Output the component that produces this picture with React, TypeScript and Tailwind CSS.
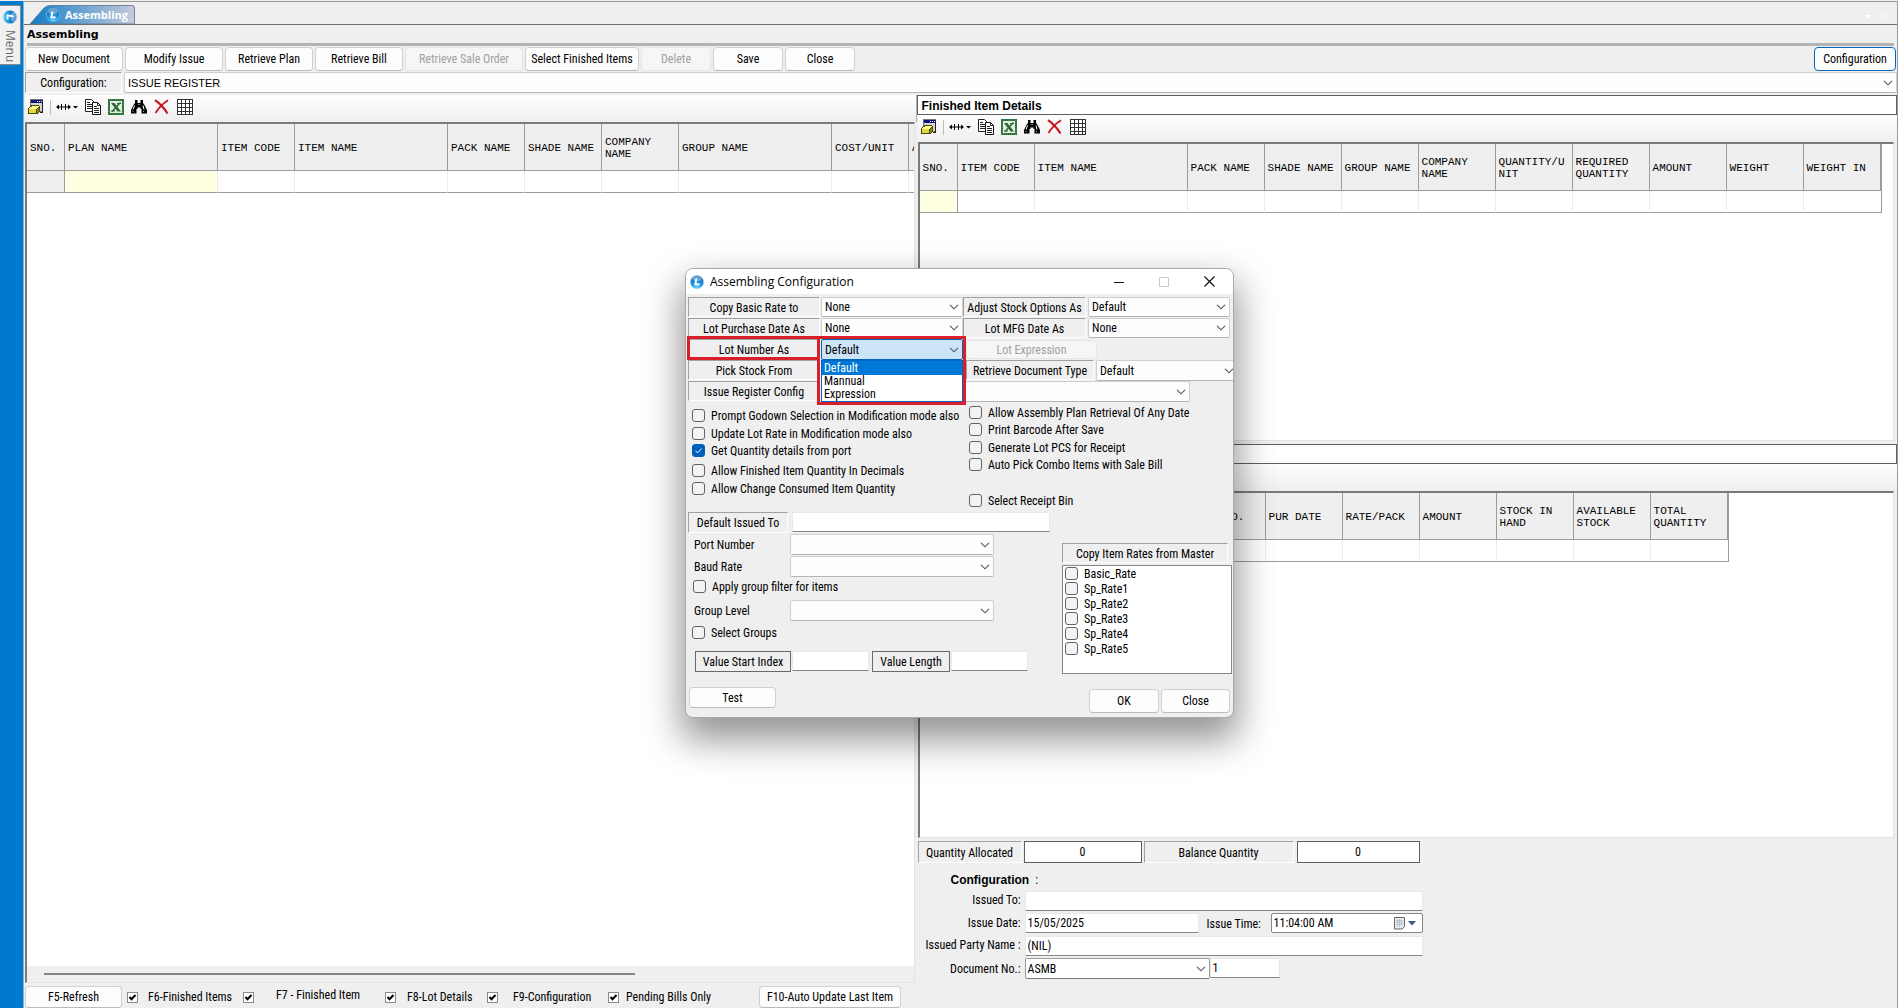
import React, { useId } from "react";

const UI = "font-['Roboto_Condensed','Roboto',sans-serif] text-[12px] leading-4 text-black";

function LogoIcon({ size = 14 }: { size?: number }) {
  const id = useId();
  return (
    <svg width={size} height={size} viewBox="0 0 14 14" aria-hidden="true" className="shrink-0">
      <defs>
        <radialGradient id={id} cx="50%" cy="90%" r="85%">
          <stop offset="0" stopColor="#5fd0fb" />
          <stop offset="0.5" stopColor="#1f93dc" />
          <stop offset="1" stopColor="#0b5cab" />
        </radialGradient>
      </defs>
      <circle cx="7" cy="7" r="6.6" fill={`url(#${id})`} stroke="#8ecbf2" strokeWidth="0.6" />
      <ellipse cx="7" cy="3.4" rx="4.8" ry="2.6" fill="#ffffff" opacity="0.35" />
      <path d="M5.4 3.4h1.900L6.500 8.600h3.200l-.3 1.600H4.300z" fill="#fff" />
    </svg>
  );
}

function Chevron() {
  return (
    <svg width="10" height="6" viewBox="0 0 10 6" aria-hidden="true">
      <path d="M1 0.8 5 4.8 9 0.8" fill="none" stroke="#555" strokeWidth="1.1" />
    </svg>
  );
}

function Combo({ label, value = "", className, inner = "bg-[#fdfdfd] border-[#cfcfcf] border-b-[#b4b4b4]", pad = "pl-[3px]" }: {
  label: string; value?: string; className: string; inner?: string; pad?: string;
}) {
  return (
    <span className={"relative flex shrink-0 " + className}>
      <select aria-label={label} defaultValue={value} className={"h-full w-full appearance-none rounded-[2px] border pr-5 outline-none " + pad + " " + inner}>
        <option>{value}</option>
      </select>
      <span className="pointer-events-none absolute inset-y-0 right-1 flex items-center"><Chevron /></span>
    </span>
  );
}

function Sunken({ children, className }: { children: React.ReactNode; className: string }) {
  return (
    <span className={"flex shrink-0 items-center justify-center whitespace-nowrap border border-t-[#a0a0a0] border-l-[#a0a0a0] border-r-white border-b-white pt-px " + className}>
      {children}
    </span>
  );
}

function Button({ children, className, disabled }: { children: React.ReactNode; className: string; disabled?: boolean }) {
  return (
    <button
      type="button"
      disabled={disabled}
      className={"shrink-0 rounded-[4px] border border-[#d0d0d0] border-b-[#bcbcbc] bg-[#fdfdfd] whitespace-nowrap disabled:border-[#e6e6e6] disabled:bg-[#f6f6f6] disabled:text-[#a0a0a0] " + className}
    >
      {children}
    </button>
  );
}

function Check({ label, className = "", checked = false, row = "h-[17px]" }: { label: string; className?: string; checked?: boolean; row?: string }) {
  const id = useId();
  return (
    <div className={"flex items-center " + row + " " + className}>
      <span className="relative flex size-[13px] shrink-0">
        <input id={id} type="checkbox" defaultChecked={checked} className="size-[13px] appearance-none rounded-[3px] border border-[#626262] bg-[#f3f3f3] checked:border-[#005fb8] checked:bg-[#005fb8]" />
        {checked && (
          <svg viewBox="0 0 13 13" className="pointer-events-none absolute inset-0" aria-hidden="true">
            <path d="M3.5 6.8 5.6 8.8 9.6 4.6" fill="none" stroke="#fff" />
          </svg>
        )}
      </span>
      <label htmlFor={id} className="whitespace-nowrap pl-[6px]">{label}</label>
    </div>
  );
}

function ClassicCheck({ label, className, labelClass }: { label: string; className: string; labelClass: string }) {
  const id = useId();
  return (
    <div className={"flex shrink-0 items-center " + className}>
      <span className="relative flex size-[11px] shrink-0">
        <input id={id} type="checkbox" defaultChecked className="size-[11px] appearance-none border border-[#8a8a8a] bg-white" />
        <svg viewBox="0 0 11 11" className="pointer-events-none absolute inset-0" aria-hidden="true">
          <path d="M2.5 5 4.5 7.2 8.5 3" fill="none" stroke="#000" strokeWidth="2" />
        </svg>
      </span>
      <label htmlFor={id} className={"whitespace-nowrap " + labelClass}>{label}</label>
    </div>
  );
}

function FormIcon() {
  return (
    <svg width="16" height="16" viewBox="0 0 16 16" shapeRendering="crispEdges" aria-hidden="true">
      <path d="M2 0h13v13H2z" fill="#777" />
      <path d="M3 1h11v11H3z" fill="#d4d4d4" />
      <path d="M3 1h11v3H3z" fill="#10107a" />
      <path d="M9 2h1v1H9zM11 2h1v1h-1zM13 2h1v1h-1z" fill="#fff" />
      <path d="M4 6h7v1h1v5l-3 3H0V9z" fill="#4a4a08" />
      <path d="M5 7h6v1l-3 2H1V9z" fill="#ffff8a" />
      <path d="M1 10h7v4H1z" fill="#e0d840" />
      <path d="M9 10l2-2v4l-2 2z" fill="#8c8416" />
      <path d="M14 1h1v13h-3v-1h2z" fill="#222" />
    </svg>
  );
}

function WidthIcon() {
  return (
    <svg width="24" height="16" viewBox="0 0 24 16" aria-hidden="true">
      <path d="M0 8 3 5.500v5zM15 8l-3-2.500v5z" fill="#000" />
      <path d="M2 7.500h11v1H2zM5 5h1v6H5zM9 5h1v6H9z" fill="#000" />
      <path d="M17 7h5L19.500 9.500z" fill="#000" />
    </svg>
  );
}

function CopyIcon() {
  return (
    <svg width="16" height="16" viewBox="0 0 16 16" aria-hidden="true">
      <path d="M.5.500h6l2.500 2.500v9.500H.5z" fill="#fff" stroke="#222" />
      <path d="M2 3.500h3M2 5.500h5M2 7.500h5M2 9.500h5" stroke="#222" />
      <path d="M7.500 3.500h5l3 3v9h-8z" fill="#fff" stroke="#111" />
      <path d="M12.500 3.500v3h3M9 7.500h3M9 9.500h5M9 11.500h5M9 13.500h5" stroke="#222" fill="none" />
    </svg>
  );
}

function ExcelIcon() {
  return (
    <svg width="16" height="16" viewBox="0 0 16 16" aria-hidden="true">
      <path d="M1 1h14v14H1z" fill="#e4efe4" stroke="#2a6a34" strokeWidth="2" />
      <path d="M1 1h14v14H1z" fill="none" stroke="#5f9c6a" strokeDasharray="1 1" />
      <path d="M3 4h3.500l6.500 8.500H9.500z" fill="#2a6a34" />
      <path d="M12.500 3.500 4 12.500" stroke="#2a6a34" strokeWidth="1.400" />
      <path d="M9 4.500h4M3 12h4" stroke="#2a6a34" />
    </svg>
  );
}

function FindIcon() {
  return (
    <svg width="16" height="16" viewBox="0 0 16 16" aria-hidden="true">
      <path d="M4 1h2.500v3H9.500V1H12v3l1.500 2L16 11v3.500h-5.500V10h-1V8.500h-3V10h-1v4.500H0V11l2.500-5L4 4z" fill="#000" />
      <path d="M3.500 6.500 2 10.500M12 6.500l1 4M7.500 5.500h1" stroke="#fff" />
      <path d="M1.500 12.500h1M12 12.500h1" stroke="#aaa" />
    </svg>
  );
}

function DeleteIcon() {
  return (
    <svg width="16" height="16" viewBox="0 0 16 16" aria-hidden="true">
      <path d="M1 1.200C4.500 3.500 10 9 13.500 14.500" fill="none" stroke="#c8141c" strokeWidth="2.200" />
      <path d="M14 1.200C9.500 4 4.500 9 1.500 14" fill="none" stroke="#c8141c" strokeWidth="1.700" />
    </svg>
  );
}

function GridIcon() {
  return (
    <svg width="16" height="16" viewBox="0 0 16 16" shapeRendering="crispEdges" aria-hidden="true">
      <path d="M0 0h16v16H0z" fill="#333" />
      {[1, 5, 9, 13].map((y) => [1, 5, 9, 13].map((x) => (
        <rect key={x + "-" + y} x={x} y={y} width={x === 13 ? 2 : 3} height={y === 13 ? 2 : 3} fill="#fff" />
      )))}
    </svg>
  );
}

function Toolbar() {
  const tools: [string, React.ReactNode][] = [
    ["Copy", <CopyIcon key="c" />],
    ["Export to Excel", <ExcelIcon key="e" />],
    ["Find", <FindIcon key="f" />],
    ["Remove", <DeleteIcon key="d" />],
    ["Grid", <GridIcon key="g" />],
  ];
  return (
    <div className="flex h-[27px] shrink-0 items-center bg-gradient-to-b from-[#fdfdfd] to-[#efefef] pb-[3px] pl-[3px]">
      <button type="button" aria-label="Form"><FormIcon /></button>
      <span className="ml-[6px] mr-[5px] h-[15px] w-px bg-[#bdbdbd]" />
      <button type="button" aria-label="Column width" className="mr-[5px]"><WidthIcon /></button>
      <div className="flex gap-[7px]">
        {tools.map(([name, icon]) => (
          <button key={name} type="button" aria-label={name}>{icon}</button>
        ))}
      </div>
    </div>
  );
}

type Col = [string, number];

function Grid({ cols, yellow, closed, offset }: { cols: Col[]; yellow: number; closed?: boolean; offset?: string }) {
  const total = cols.reduce((sum, c) => sum + c[1], 0);
  return (
    <table className="table-fixed border-separate border-spacing-0" style={{ width: total }}>
      <colgroup>{cols.map((c, i) => <col key={i} style={{ width: c[1] }} />)}</colgroup>
      <thead>
        <tr className="h-[47px]">
          {cols.map((c, i) => (
            <th key={i} className={"border-r border-b border-[#9c9c9c] bg-[#efefef] p-0 text-left align-middle font-['Liberation_Mono',monospace] text-[11px] font-normal leading-3 " + (closed && i === cols.length - 1 ? "border-r-2" : "")}>
              <div className={"overflow-hidden break-all whitespace-pre-line pr-[2px] pt-px " + (offset && c[0] === "NO." ? offset : "pl-[3px]")}>{c[0]}</div>
            </th>
          ))}
        </tr>
      </thead>
      <tbody>
        <tr className="h-[22px]">
          {cols.map((_, i) => (
            <td
              key={i}
              className={
                "border-r border-b border-b-[#9c9c9c] p-0 " +
                (i === yellow ? "bg-[#ffffe1] " : i === 0 ? "bg-[#efefef] " : "bg-white ") +
                (i === 0 || (closed && i === cols.length - 1) ? "border-r-[#9c9c9c]" : "border-r-[#ebebeb]")
              }
            />
          ))}
        </tr>
      </tbody>
    </table>
  );
}

const FRAME = "min-h-0 overflow-hidden border-t-2 border-l-2 border-r border-b border-t-[#7a7a7a] border-l-[#7a7a7a] border-r-[#e3e3e3] border-b-[#e3e3e3] bg-white";
const TEXTBOX = "h-5 border border-[#e8e8e8] border-b-[#868686] bg-white pl-[2px] outline-none";

function DialogRow({ label, children }: { label: string; children: React.ReactNode }) {
  return (
    <div className="flex h-[21px] items-start">
      <Sunken className="mr-px h-5 w-[132px]">{label}</Sunken>
      {children}
    </div>
  );
}

function Dialog() {
  return (
    <section role="dialog" aria-label="Assembling Configuration" className="absolute left-[685px] top-[268px] w-[549px] overflow-hidden rounded-lg border border-[#a9a9a9] bg-[#efefef] shadow-[0_18px_36px_4px_rgba(0,0,0,0.42)]">
      <header className="flex h-[25px] items-center bg-white pl-1 font-['Open_Sans','Noto_Sans',sans-serif] text-[12px]">
        <LogoIcon />
        <h2 className="flex-1 pl-[6px]">Assembling Configuration</h2>
        <button type="button" aria-label="Minimize" className="flex w-[45px] justify-center">
          <svg width="10" height="10" viewBox="0 0 10 10"><path d="M0 5.500h10" stroke="#111" /></svg>
        </button>
        <button type="button" aria-label="Maximize" disabled className="flex w-[45px] justify-center">
          <svg width="10" height="10" viewBox="0 0 10 10"><path d="M.5.500h9v9h-9z" fill="none" stroke="#c8c8c8" /></svg>
        </button>
        <button type="button" aria-label="Close window" className="flex w-[47px] justify-center">
          <svg width="11" height="11" viewBox="0 0 11 11"><path d="M.5.500l10 10M10.500.500l-10 10" stroke="#111" strokeWidth="1.200" /></svg>
        </button>
      </header>

      <div className="pb-1 pl-[2px] pt-[3px]">
        <div className="relative">
          <DialogRow label="Copy Basic Rate to">
            <Combo label="Copy Basic Rate to" value="None" className="h-5 w-[142px]" />
            <Sunken className="mr-[2px] h-5 w-[123px]">Adjust Stock Options As</Sunken>
            <Combo label="Adjust Stock Options As" value="Default" className="h-5 w-[142px]" />
          </DialogRow>
          <DialogRow label="Lot Purchase Date As">
            <Combo label="Lot Purchase Date As" value="None" className="h-5 w-[142px]" />
            <Sunken className="mr-[2px] h-5 w-[123px]">Lot MFG Date As</Sunken>
            <Combo label="Lot MFG Date As" value="None" className="h-5 w-[142px]" />
          </DialogRow>
          <DialogRow label="Lot Number As">
            <Combo label="Lot Number As" value="Default" className="mr-[3px] h-[21px] w-[142px]" inner="bg-[#cce4f7] border-[#0067c0]" />
            <Button disabled className="h-[19px] w-[131px] self-center">Lot Expression</Button>
          </DialogRow>
          <DialogRow label="Pick Stock From">
            <span className="w-[145px] shrink-0" />
            <Sunken className="mr-[2px] h-5 w-[128px]">Retrieve Document Type</Sunken>
            <Combo label="Retrieve Document Type" value="Default" className="h-[21px] w-[142px]" />
          </DialogRow>
          <DialogRow label="Issue Register Config">
            <Combo label="Issue Register Config" className="h-[21px] w-[369px]" />
          </DialogRow>

          <ul role="listbox" aria-label="Lot Number As options" className="absolute left-[133px] top-[63px] w-[142px] border border-[#0067c0] bg-white leading-[13px]">
            <li role="option" aria-selected="true" className="bg-[#0078d7] pl-[2px] pt-px text-white">Default</li>
            <li role="option" aria-selected="false" className="pl-[2px]">Mannual</li>
            <li role="option" aria-selected="false" className="pl-[2px]">Expression</li>
          </ul>
          <span className="pointer-events-none absolute -left-px top-[39px] h-6 w-[133px] border-[3px] border-[#d9202a]" />
          <span className="pointer-events-none absolute left-[129px] top-[39px] h-[69px] w-[149px] border-[3px] border-[#d9202a]" />
        </div>

        <div className="flex pl-1">
          <div className="w-[277px] pt-[5px]">
            <Check label="Prompt Godown Selection in Modification mode also" />
            <Check label="Update Lot Rate in Modification mode also" className="mt-px" />
            <Check label="Get Quantity details from port" checked />
            <Check label="Allow Finished Item Quantity In Decimals" className="mt-[3px]" />
            <Check label="Allow Change Consumed Item Quantity" className="mt-px" />
          </div>
          <div className="pt-[2px]">
            <Check label="Allow Assembly Plan Retrieval Of Any Date" />
            <Check label="Print Barcode After Save" />
            <Check label="Generate Lot PCS for Receipt" className="mt-px" />
            <Check label="Auto Pick Combo Items with Sale Bill" />
            <Check label="Select Receipt Bin" className="mt-[19px]" />
          </div>
        </div>

        <div className="mt-[3px] flex">
          <div className="w-[374px]">
            <div className="flex">
              <Sunken className="mr-1 h-[21px] w-[100px]">Default Issued To</Sunken>
              <input aria-label="Default Issued To" className={TEXTBOX + " w-[258px]"} />
            </div>
            <div className="mt-px flex items-center">
              <span className="w-[102px] pl-[6px]">Port Number</span>
              <Combo label="Port Number" className="h-[21px] w-[204px]" />
            </div>
            <div className="mt-px flex items-center">
              <span className="w-[102px] pl-[6px]">Baud Rate</span>
              <Combo label="Baud Rate" className="h-[21px] w-[204px]" />
            </div>
            <Check label="Apply group filter for items" className="mt-px pl-[5px]" />
            <div className="mt-[5px] flex items-center">
              <span className="w-[102px] pl-[6px]">Group Level</span>
              <Combo label="Group Level" className="h-[21px] w-[204px]" />
            </div>
            <Check label="Select Groups" className="mt-[3px] pl-1" />
            <div className="mt-[10px] flex pl-[7px]">
              <label htmlFor="vstart" className="mr-px flex h-[21px] w-24 items-center justify-center border border-[#6a6a6a]">Value Start Index</label>
              <input id="vstart" className={TEXTBOX + " mr-[3px] w-[77px]"} />
              <label htmlFor="vlen" className="mr-px flex h-[21px] w-[78px] items-center justify-center border border-[#6a6a6a]">Value Length</label>
              <input id="vlen" className={TEXTBOX + " w-[77px]"} />
            </div>
          </div>
          <div className="pt-[31px]">
            <Sunken className="mb-[2px] h-5 w-[166px]">Copy Item Rates from Master</Sunken>
            <div className="h-[109px] w-[170px] border border-[#828790] bg-white pl-[2px]">
              {["Basic_Rate", "Sp_Rate1", "Sp_Rate2", "Sp_Rate3", "Sp_Rate4", "Sp_Rate5"].map((n) => (
                <Check key={n} label={n} row="h-[15px]" />
              ))}
            </div>
          </div>
        </div>

        <footer className="mt-[13px] flex items-start pl-px pr-[3px]">
          <Button className="h-[21px] w-[87px]">Test</Button>
          <span className="flex-1" />
          <Button className="mr-[2px] mt-[2px] h-6 w-[70px]">OK</Button>
          <Button className="mt-[2px] h-6 w-[69px]">Close</Button>
        </footer>
      </div>
    </section>
  );
}

const ACTIONS: { label: string; w: string; off?: boolean }[] = [
  { label: "New Document", w: "w-[98px]" },
  { label: "Modify Issue", w: "w-[98px]" },
  { label: "Retrieve Plan", w: "w-[88px]" },
  { label: "Retrieve Bill", w: "w-[88px]" },
  { label: "Retrieve Sale Order", w: "w-[118px]", off: true },
  { label: "Select Finished Items", w: "w-[114px]" },
  { label: "Delete", w: "w-[70px]", off: true },
  { label: "Save", w: "w-[70px]" },
  { label: "Close", w: "w-[70px]" },
];

const PLAN_COLS: Col[] = [
  ["SNO.", 38], ["PLAN NAME", 153], ["ITEM CODE", 77], ["ITEM NAME", 153], ["PACK NAME", 77],
  ["SHADE NAME", 77], ["COMPANY\nNAME", 77], ["GROUP NAME", 153], ["COST/UNIT", 77], ["AMOUNT", 77],
];
const FINISHED_COLS: Col[] = [
  ["SNO.", 38], ["ITEM CODE", 77], ["ITEM NAME", 153], ["PACK NAME", 77], ["SHADE NAME", 77], ["GROUP NAME", 77],
  ["COMPANY\nNAME", 77], ["QUANTITY/UNIT", 77], ["REQUIRED\nQUANTITY", 77], ["AMOUNT", 77], ["WEIGHT", 77], ["WEIGHT IN", 78],
];
const STOCK_COLS: Col[] = [
  ["SNO.", 38], ["", 230], ["NO.", 78], ["PUR DATE", 77], ["RATE/PACK", 77], ["AMOUNT", 77], ["STOCK IN\nHAND", 77],
  ["AVAILABLE\nSTOCK", 77], ["TOTAL\nQUANTITY", 78],
];

export default function App() {
  return (
    <div className={"relative flex h-screen overflow-hidden bg-[#efefef] pt-px " + UI}>
      <aside className="w-6 shrink-0 border-r border-[#7fb4d8] bg-[#007acc] pt-1">
        <button type="button" className="flex h-[60px] w-[21px] flex-col items-center gap-[6px] rounded-r-[2px] border border-l-0 border-[#8a8a8a] bg-[#f0f0f0] pt-1 font-['Open_Sans',sans-serif] text-[12px] leading-3 text-[#666]">
          <span className="rotate-90"><LogoIcon /></span>
          <span className="[writing-mode:vertical-rl]">Menu</span>
        </button>
      </aside>

      <main className="flex min-w-0 flex-1 flex-col border-t border-r border-[#9a9a9a]">
        <div className="flex h-[23px] shrink-0 items-end border-b border-[#6d6d6d] pl-[6px]">
          <div className="relative flex h-[19px] w-[105px] items-center pl-4">
            <svg className="absolute inset-0" width="105" height="19" viewBox="0 0 105 19" aria-hidden="true">
              <defs>
                <linearGradient id="tab" x1="0" x2="1" y1="0" y2="0">
                  <stop offset="0" stopColor="#0f7cc8" />
                  <stop offset="1" stopColor="#c6cbdb" />
                </linearGradient>
              </defs>
              <path d="M0 19 14 3Q16.500.500 20 .5H102Q104.500.500 104.500 3V19z" fill="url(#tab)" stroke="#5f6f80" strokeWidth="0.800" />
            </svg>
            <span className="relative flex items-center gap-[5px] font-['Open_Sans','Noto_Sans',sans-serif] text-[11px] font-bold text-white"><LogoIcon />Assembling</span>
          </div>
          <span className="flex-1" />
          <span className="mb-1 mr-[10px] flex gap-[7px] text-white">
            <svg width="8" height="8" viewBox="0 0 8 8" aria-hidden="true"><path d="M1 3h6L4 6z" fill="currentColor" /></svg>
            <svg width="8" height="8" viewBox="0 0 8 8" aria-hidden="true"><path d="M1 1l6 6M7 1 1 7" stroke="currentColor" /></svg>
          </span>
        </div>
        <h1 className="mx-[3px] h-[21px] shrink-0 border-b-[3px] border-[#b3b3b3] pt-px font-['DejaVu_Sans',sans-serif] text-[11px] font-bold leading-[18px]">Assembling</h1>

        <div className="flex shrink-0 gap-[2px] py-px pl-px pr-px">
          {ACTIONS.map((a) => <Button key={a.label} disabled={a.off} className={"h-6 " + a.w}>{a.label}</Button>)}
          <span className="flex-1" />
          <Button className="h-6 w-[82px] border-[#0067c0]!">Configuration</Button>
        </div>

        <div className="flex shrink-0 pl-px">
          <Sunken className="mr-[2px] h-[21px] w-[97px]">Configuration:</Sunken>
          <Combo label="Configuration" value="ISSUE REGISTER" className="h-[21px] min-w-0 flex-1 font-['Liberation_Sans',sans-serif] text-[11px]" inner="bg-[#fdfdfd] border-[#cfcfcf] border-b-[#b4b4b4]" />
        </div>

        <div className="mt-[2px] flex min-h-0 flex-1">
          <section className="flex min-w-0 flex-[892] flex-col pl-px">
            <div className="border-r border-[#b0b0b0]"><Toolbar /></div>
            <div className={"mr-[2px] flex flex-1 flex-col " + FRAME}>
              <div className="min-h-0 flex-1 overflow-hidden"><Grid cols={PLAN_COLS} yellow={1} /></div>
              <div className="flex h-4 shrink-0 items-center bg-[#efefef] pl-[17px]">
                <span className="h-[2px] w-[68%] bg-[#868686]" />
              </div>
            </div>
            <footer className="flex h-[25px] shrink-0 items-end pt-[2px]">
              <Button className="h-[22px] w-[97px]">F5-Refresh</Button>
              <ClassicCheck label="F6-Finished Items" className="ml-[5px] h-[22px] w-[116px]" labelClass="pl-[10px]" />
              <ClassicCheck label="F7 - Finished Item" className="h-[22px] w-[142px]" labelClass="pb-1 pl-[22px]" />
              <ClassicCheck label="F8-Lot Details" className="h-[22px] w-[102px]" labelClass="pl-[11px]" />
              <ClassicCheck label="F9-Configuration" className="h-[22px] w-[121px]" labelClass="pl-[15px]" />
              <ClassicCheck label="Pending Bills Only" className="h-[22px] w-[151px]" labelClass="pl-[7px]" />
              <Button className="h-[22px] w-[142px]">F10-Auto Update Last Item</Button>
            </footer>
          </section>

          <section className="flex min-w-0 flex-[981] flex-col">
            <h2 className="h-5 shrink-0 border border-[#5f5f5f] bg-white pl-1 font-['Liberation_Sans',sans-serif] text-[12px] font-bold leading-5">Finished Item Details</h2>
            <div className="pl-px"><Toolbar /></div>
            <div className={"ml-px mr-[3px] h-[299px] shrink-0 " + FRAME}><Grid cols={FINISHED_COLS} yellow={0} closed /></div>
            <div className="mt-[3px] h-5 shrink-0 border border-[#5f5f5f] bg-white" />
            <div className="h-[27px] shrink-0 bg-gradient-to-b from-[#fdfdfd] to-[#efefef]" />
            <div className={"ml-px mr-[3px] flex-1 " + FRAME}><Grid cols={STOCK_COLS} yellow={-1} closed offset="pl-[37px]" /></div>

            <div className="shrink-0 pb-[29px] pl-px pt-[3px]">
              <div className="flex h-[22px]">
                <Sunken className="mr-[2px] w-[104px]">Quantity Allocated</Sunken>
                <output aria-label="Quantity Allocated" className="mr-[2px] flex w-[118px] items-center justify-center border border-[#5f5f5f] bg-white">0</output>
                <Sunken className="mr-[3px] w-[150px]">Balance Quantity</Sunken>
                <output aria-label="Balance Quantity" className="flex w-[123px] items-center justify-center border border-[#5f5f5f] bg-white">0</output>
              </div>
              <h3 className="mb-[3px] mt-[9px] flex pl-[33px] leading-4">
                <span className="font-['Liberation_Sans',sans-serif] text-[12px] font-bold">Configuration</span>
                <span className="pl-[6px]">:</span>
              </h3>
              <div className="grid grid-cols-[103px_398px] gap-x-1 gap-y-[2px] whitespace-nowrap">
                <label htmlFor="issuedTo" className="pt-px text-right">Issued To:</label>
                <input id="issuedTo" className={TEXTBOX} />
                <label htmlFor="issueDate" className="pt-[2px] text-right">Issue Date:</label>
                <div className="flex h-[21px]">
                  <input id="issueDate" defaultValue="15/05/2025" className={TEXTBOX + " w-[174px]"} />
                  <label htmlFor="issueTime" className="w-[72px] pl-2 pt-[3px]">Issue Time:</label>
                  <div className="flex h-5 w-[152px] items-center rounded-[2px] border border-[#868686] bg-white pl-[2px] pr-[6px]">
                    <input id="issueTime" defaultValue="11:04:00 AM" className="min-w-0 flex-1 outline-none" />
                    <button type="button" aria-label="Pick time" className="flex items-center gap-[2px]">
                      <svg width="12" height="13" viewBox="0 0 12 13" aria-hidden="true">
                        <path d="M.5.500h10v9l-2.500 2.500H.5z" fill="#e9edf2" stroke="#666" />
                        <path d="M2 3.500h7M2 5.500h7M2 7.500h7M3.500 2v8M5.500 2v8M7.500 2v6" stroke="#9fb0c2" strokeWidth="0.600" />
                      </svg>
                      <svg width="8" height="5" viewBox="0 0 8 5" aria-hidden="true"><path d="M0 0h8L4 4.500z" fill="#3b5a85" /></svg>
                    </button>
                  </div>
                </div>
                <label htmlFor="party" className="pt-px text-right">Issued Party Name :</label>
                <input id="party" defaultValue="(NIL)" className={TEXTBOX} />
                <span className="pt-[3px] text-right">Document No.:</span>
                <div className="flex h-[21px]">
                  <Combo label="Document type" value="ASMB" className="h-[21px] w-[185px]" inner="bg-white border-[#9a9a9a] border-b-[#7a7a7a]" pad="pl-[2px]" />
                  <input aria-label="Document No." defaultValue="1" className={TEXTBOX + " w-[70px]"} />
                </div>
              </div>
            </div>
          </section>
        </div>
      </main>

      <Dialog />
    </div>
  );
}
